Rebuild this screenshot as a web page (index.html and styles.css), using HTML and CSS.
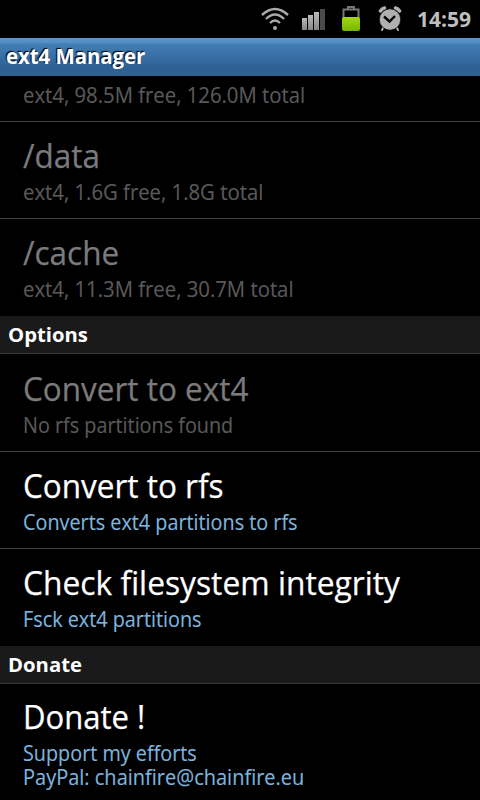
FILE: index.html
```html
<!DOCTYPE html>
<html lang="en">
<head>
<meta charset="utf-8">
<title>ext4 Manager</title>
<link rel="stylesheet" href="styles.css">
</head>
<body>
<div class="status">
  <svg class="wifi" width="30" height="24" viewBox="0 0 30 24" fill="none" stroke="#aaa" stroke-width="2.4">
    <path d="M2 9Q15-3 28 9M6 13Q15 4 24 13M10 17Q15 12 20 17"/><circle cx="15" cy="22" r="2" fill="#aaa" stroke="none"/>
  </svg>
  <svg class="signal" width="24" height="22" viewBox="0 0 24 22">
    <defs><linearGradient id="bar" x2="0" y2="1"><stop stop-color="#bbb"/><stop offset="1" stop-color="#858585"/></linearGradient></defs>
    <path d="M0 9h5v12H0z" fill="url(#bar)"/><path d="M6 6h5v15H6z" fill="url(#bar)"/><path d="M12 3h5v18h-5z" fill="url(#bar)"/><path d="M18 0h5v21h-5z" fill="#4a4a4a"/>
  </svg>
  <svg class="battery" width="20" height="26" viewBox="0 0 20 26">
    <defs><linearGradient id="charge" x2="0" y2="1"><stop stop-color="#a4d810"/><stop offset="1" stop-color="#76b500"/></linearGradient></defs>
    <path d="M7 2.500V1h6v1.500M2.500 12V3.500h15V12" fill="none" stroke="#777" stroke-width="2"/>
    <rect x="1" y="11" width="18" height="14" rx="2" fill="url(#charge)"/>
  </svg>
  <svg class="alarm" width="24" height="26" viewBox="0 0 24 26">
    <g fill="none" stroke="#b0b0b0" stroke-linecap="round"><path d="M2.500 5Q4 2.500 6.500 2M17.500 2Q20 2.500 21.500 5" stroke-width="3.500"/><path d="M5.500 21L4 24M18.500 21L20 24" stroke-width="2"/></g>
    <circle cx="12" cy="13.500" r="10.700" fill="#b0b0b0" stroke="#000" stroke-width=".8"/>
    <path d="M6 10.500L11.500 15.500L17 10" fill="none" stroke="#000" stroke-width="2.400"/>
  </svg>
  <span class="clock">14:59</span>
</div>
<header class="titlebar"><h1>ext4 Manager</h1></header>
<main>
  <section class="row clipped off"><p class="figures">ext4, 98.5M free, 126.0M total</p></section>
  <section class="row off"><h2>/data</h2><p class="figures">ext4, 1.6G free, 1.8G total</p></section>
  <section class="row off last"><h2>/cache</h2><p class="figures">ext4, 11.3M free, 30.7M total</p></section>
  <h3>Options</h3>
  <section class="row off tall"><h2>Convert to ext4</h2><p>No rfs partitions found</p></section>
  <section class="row"><h2>Convert to rfs</h2><p>Converts ext4 partitions to rfs</p></section>
  <section class="row last"><h2 class="long">Check filesystem integrity</h2><p>Fsck ext4 partitions</p></section>
  <h3>Donate</h3>
  <section class="row last donate"><h2>Donate !</h2><p>Support my efforts</p><p class="address">PayPal: chainfire@chainfire.eu</p></section>
</main>
</body>
</html>
```
FILE: styles.css
```css
* { box-sizing: border-box; margin: 0; padding: 0; }
body { height: 800px; overflow: hidden; background: #000; color: #fff; font-family: "Open Sans", "Noto Sans", sans-serif; }
.status { height: 38px; display: flex; justify-content: flex-end; align-items: flex-start; padding-right: 9px; }
.wifi { margin: 6px 12px 0 0; }
.signal { margin: 9px 15px 0 0; }
.battery { margin: 6px 17px 0 0; }
.alarm { margin: 6px 15px 0 0; }
.clock { font-size: 21px; font-weight: 700; line-height: 38px; color: #bebebe; }
.titlebar { height: 38px; padding-left: 6px; background: linear-gradient(#5b97d0 0, #5590c8 10%, #417db5 18%, #2e6295 75%, #2e6090 100%); }
h1, h2, p { transform-origin: left; width: max-content; white-space: nowrap; }
h1 { font-size: 21px; font-weight: 700; line-height: 36px; text-shadow: -1px -1px 1px #000; transform: scaleX(.968); }
h2 { font-size: 33px; font-weight: 400; line-height: 47px; margin-bottom: 1px; transform: scaleX(.954); -webkit-text-stroke: .25px; }
h2.long { transform: scaleX(.962); }
p { font-size: 21.5px; line-height: 24px; color: #7db5df; transform: scaleX(.921); -webkit-text-stroke: .15px; }
.figures { transform: scaleX(.945); }
.address { transform: scaleX(.93); }
h3 { height: 38px; padding-left: 8px; font-size: 20.3px; line-height: 37px; border-bottom: 1px solid #383838; background: #1a1a1a; }
.row { height: 97px; padding: 10px 0 0 23px; border-bottom: 1px solid #444; }
.tall { height: 98px; padding-top: 11px; }
.clipped { height: 46px; padding-top: 7px; }
.last { border-bottom: 0; }
.donate { height: 116px; padding-top: 9px; }
.donate h2 { transform: scaleX(.94); }
.off h2 { color: #7b7b7b; }
.off p { color: #5a5a5a; }
```
